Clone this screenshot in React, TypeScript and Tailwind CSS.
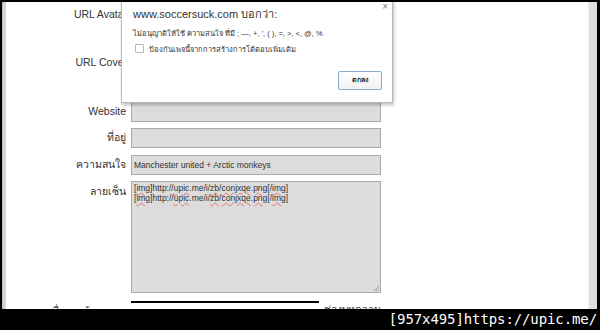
import React from "react";

const thai = '"Liberation Sans", "Noto Sans", "DejaVu Sans", sans-serif';

function Sig() {
  const w = "underline decoration-wavy decoration-[#e8706c] decoration-[1px] underline-offset-[1px]";
  return (
    <div className="leading-[10px]">
      [<span className={w}>img</span>]http://<span className={w}>upic</span>.me/i/<span className={w}>zb</span>/<span className={w}>conjxqe</span>.<span className={w}>png</span>[/<span className={w}>img</span>]
    </div>
  );
}

function Row({ label, children, className = "" }: { label: string; children: React.ReactNode; className?: string }) {
  return (
    <div className={"flex items-center " + className}>
      <div className="w-[125px] pr-[5px] text-right text-[10.5px] text-[#333]">{label}</div>
      {children}
    </div>
  );
}

export default function App() {
  return (
    <div className="w-[600px] h-[330px] bg-black overflow-hidden flex flex-col" style={{ fontFamily: thai }}>
      <div className="h-[2px]" />
      <div className="h-[308px] flex pl-[2px] pr-[3px]">
        <div className="w-[4px] bg-[#d4d4d4] border-l border-[#bdbdbd]" />
        <div className="flex-1 bg-white relative overflow-hidden">
          <div className="flex flex-col">
            <div className="h-[48px] flex">
              <div className="w-[125px] pr-[4px] text-right text-[10.5px] text-[#333] pt-[5px]">URL Avatar</div>
            </div>
            <div className="h-[52px] flex">
              <div className="w-[125px] pr-[4px] text-right text-[10.5px] text-[#333] pt-[5px]">URL Cover</div>
            </div>
            <Row label="Website">
              <div className="w-[250px] h-[20px] bg-[#dcdcdc] border border-[#a9a9a9]" />
            </Row>
            <Row label="ที่อยู่" className="mt-[6px]">
              <div className="w-[250px] h-[20px] bg-[#dcdcdc] border border-[#a9a9a9]" />
            </Row>
            <Row label="ความสนใจ" className="mt-[7px]">
              <div className="w-[250px] h-[20px] bg-[#dcdcdc] border border-[#a9a9a9] flex items-center pl-[2px] text-[8.5px] text-[#333]">
                Manchester united + Arctic monkeys
              </div>
            </Row>
            <div className="flex mt-[6px]">
              <div className="w-[125px] pr-[5px] text-right text-[10.5px] text-[#333] pt-[3px]">ลายเซ็น</div>
              <div className="w-[250px] h-[112px] bg-[#dcdcdc] border border-[#a9a9a9] pl-[2px] pt-[1px] text-[8.5px] text-[#333] relative">
                <Sig />
                <Sig />
                <svg className="absolute right-[1px] bottom-[1px]" width="6" height="6" viewBox="0 0 6 6">
                  <path d="M6 1 L1 6 M6 3.5 L3.5 6" stroke="#888" strokeWidth="0.8" />
                </svg>
              </div>
            </div>
            <div className="flex mt-[8px]">
              <div className="w-[125px] relative">
                <span className="absolute left-[46px] top-[3px] text-[10.5px] text-[#333]">ชื่อกระทู้</span>
              </div>
              <div className="w-[188px] h-[2px] bg-black" />
              <div className="relative">
                <span className="absolute left-[5px] top-[1px] text-[10px] text-[#333] whitespace-nowrap">ช่องบทความ</span>
              </div>
            </div>
          </div>

          {/* dialog */}
          <div className="absolute left-[115px] top-[-2px] w-[272px] h-[103px] bg-white border border-[#b8b8b8] shadow-[1px_2px_3px_rgba(0,0,0,0.25)]">
            <div className="absolute left-[11px] top-[5px] text-[11px] text-[#333] whitespace-nowrap">www.soccersuck.com บอกว่า:</div>
            <div className="absolute right-[4px] top-[1px] text-[10px] text-[#777] leading-none">×</div>
            <div className="absolute left-[11px] top-[27px] text-[7.5px] text-[#333] whitespace-nowrap">
              ไม่อนุญาติให้ใช้ ความสนใจ ที่มี ; —, +, ', ( ), =, &gt;, &lt;, @, %
            </div>
            <div className="absolute left-[13px] top-[43px] w-[9px] h-[9px] border border-[#b5b5b5] rounded-[1px] bg-white" />
            <div className="absolute left-[27px] top-[43px] text-[7.5px] text-[#333] whitespace-nowrap">
              ป้องกันเพจนี้จากการสร้างการโต้ตอบเพิ่มเติม
            </div>
            <div className="absolute left-[216px] top-[70px] w-[44px] h-[19px] border border-[#8ea6d2] rounded-[2px] bg-gradient-to-b from-white to-[#f1f1f1] flex items-center justify-center text-[7px] font-bold text-[#333]">
              ตกลง
            </div>
          </div>
        </div>
        <div className="w-[9px] bg-[#dedede] border-l border-[#f0f0f0]" />
      </div>
      <div className="flex-1 flex items-center justify-end pr-[3px]">
        <span className="text-white text-[14px] tracking-[-0.1px]" style={{ fontFamily: '"DejaVu Sans Mono", monospace' }}>
          [957x495]https://upic.me/
        </span>
      </div>
    </div>
  );
}
